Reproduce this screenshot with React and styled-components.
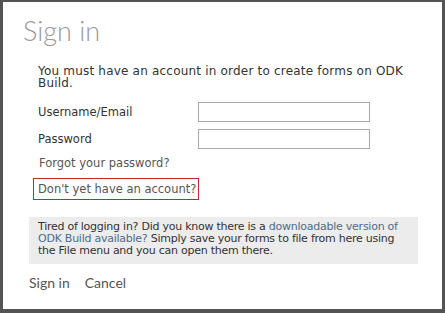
import React from "react";
import styled, { createGlobalStyle } from "styled-components";

const GlobalStyle = createGlobalStyle`
  html, body {
    margin: 0;
    padding: 0;
    background: #ffffff;
  }
  * {
    box-sizing: border-box;
  }
`;

const Dialog = styled.div`
  width: 445px;
  height: 313px;
  background: #fff;
  border: 3px solid #545454;
  border-top-width: 2px;
  border-bottom-width: 4px;
  display: flex;
  flex-direction: column;
  font-family: "DejaVu Sans", Verdana, sans-serif;
  color: #333;
`;

const Title = styled.h1`
  margin: 12px 0 0 20px;
  font-family: Lato, "Open Sans", sans-serif;
  font-weight: 300;
  font-size: 27px;
  line-height: 34px;
  color: #9a9a9a;
`;

const Body = styled.div`
  padding: 0 0 0 35px;
  margin-top: 17px;
`;

const Intro = styled.p`
  margin: 0;
  font-size: 12px;
  letter-spacing: 0.2px;
  line-height: 12px;
  width: 370px;
`;

const Fields = styled.div`
  display: flex;
  flex-direction: column;
  gap: 7px;
  margin-top: 13px;
`;

const Row = styled.label`
  display: flex;
  align-items: center;
  font-size: 11.5px;
`;

const Label = styled.span`
  width: 160px;
`;

const Input = styled.input`
  width: 172px;
  height: 20px;
  border: 1px solid #a9a9a9;
  margin: 0;
  padding: 0 3px;
`;

const Links = styled.div`
  display: flex;
  flex-direction: column;
  align-items: flex-start;
  margin-top: 6px;
  margin-left: -5px;
  gap: 7px;
`;

const PlainLink = styled.a`
  font-size: 11.5px;
  line-height: 14px;
  color: #555;
  text-decoration: none;
  white-space: nowrap;
  padding: 0 5px;
  border: 1px solid ${(p) => (p.$focused ? "#c1272d" : "transparent")};
  ${(p) => p.$focused && "width: 166px; height: 22px; line-height: 20px; padding: 0 4px;"}
`;

const Notice = styled.div`
  margin: 17px 24px 0 26px;
  background: #ececec;
  padding: 4px 9px 7px;
  font-size: 11px;
  letter-spacing: -0.25px;
  line-height: 12px;
  color: #333;
`;

const NoticeLink = styled.a`
  color: #4f6b88;
  text-decoration: none;
`;

const Footer = styled.div`
  display: flex;
  gap: 15px;
  margin: 10px 0 0 26px;
  font-family: Lato, sans-serif;
  font-size: 14px;
  color: #555;
`;

const FooterButton = styled.a`
  color: #555;
  text-decoration: none;
`;

export default function App() {
  return (
    <>
      <GlobalStyle />
      <Dialog>
        <Title>Sign in</Title>
        <Body>
          <Intro>
            You must have an account in order to create forms on ODK Build.
          </Intro>
          <Fields>
            <Row>
              <Label>Username/Email</Label>
              <Input type="text" />
            </Row>
            <Row>
              <Label>Password</Label>
              <Input type="password" />
            </Row>
          </Fields>
          <Links>
            <PlainLink href="#">Forgot your password?</PlainLink>
            <PlainLink href="#" $focused>
              Don't yet have an account?
            </PlainLink>
          </Links>
        </Body>
        <Notice>
          Tired of logging in? Did you know there is a{" "}
          <NoticeLink href="#">
            downloadable version of ODK Build available?
          </NoticeLink>{" "}
          Simply save your forms to file from here using the File menu and you
          can open them there.
        </Notice>
        <Footer>
          <FooterButton href="#">Sign in</FooterButton>
          <FooterButton href="#">Cancel</FooterButton>
        </Footer>
      </Dialog>
    </>
  );
}
